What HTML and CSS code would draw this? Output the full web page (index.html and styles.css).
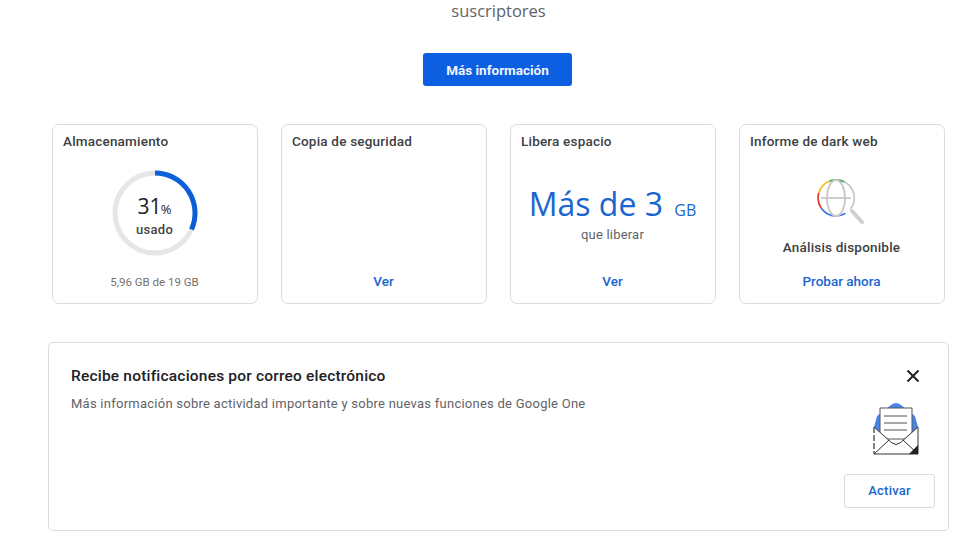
FILE: index.html
```html
<!DOCTYPE html>
<html lang="es">
<head>
<meta charset="utf-8">
<title>Google One</title>
<link rel="stylesheet" href="styles.css">
</head>
<body>
<main class="page">
  <section class="hero">
    <p class="hero-text">suscriptores</p>
    <button class="primary">Más información</button>
  </section>
  <section class="cards">
    <article class="card">
      <h2 class="card-title">Almacenamiento</h2>
      <div class="card-body">
        <div class="ring">
          <svg class="ring-svg" viewBox="0 0 86 86" width="86" height="86">
            <circle cx="43" cy="43" r="40" fill="none" stroke="#e6e6e6" stroke-width="5"/>
            <path d="M43 3A40 40 0 0 1 79.500 59.400" fill="none" stroke="#0b5fd8" stroke-width="5"/>
          </svg>
          <div class="ring-label">
            <div class="ring-value">31<span class="ring-pct">%</span></div>
            <div class="ring-used">usado</div>
          </div>
        </div>
      </div>
      <p class="card-foot muted">5,96 GB de 19 GB</p>
    </article>
    <article class="card">
      <h2 class="card-title">Copia de seguridad</h2>
      <div class="card-body"></div>
      <a class="card-foot link">Ver</a>
    </article>
    <article class="card">
      <h2 class="card-title">Libera espacio</h2>
      <div class="card-body free">
        <div class="free-amount">Más de 3 <span class="free-unit">GB</span></div>
        <div class="free-note">que liberar</div>
      </div>
      <a class="card-foot link">Ver</a>
    </article>
    <article class="card">
      <h2 class="card-title">Informe de dark web</h2>
      <div class="card-body dark">
        <svg class="dark-icon" viewBox="0 0 50 50" width="50" height="50">
          <g fill="none" stroke-width="1.800">
            <path d="M1.800 18A18 18 0 0 1 12.500 6.200" stroke="#f2c230"/>
            <path d="M12.500 6.200A18 18 0 0 1 27.500 7" stroke="#3aa757"/>
            <path d="M27.500 7A18 18 0 0 1 33.500 34" stroke="#c8c8c8"/>
            <path d="M1.800 18A18 18 0 0 0 4.200 33" stroke="#dc3f34"/>
            <path d="M4.200 33A18 18 0 0 0 28.500 38.300" stroke="#3f78e0"/>
            <ellipse cx="19" cy="23" rx="9" ry="18" stroke="#c8c8c8"/>
            <path d="M4 23H34" stroke="#c8c8c8"/>
          </g>
          <path d="M35 36L45 47" stroke="#cfcfcf" stroke-width="4" stroke-linecap="round" fill="none"/>
        </svg>
        <div class="dark-note">Análisis disponible</div>
      </div>
      <a class="card-foot link">Probar ahora</a>
    </article>
  </section>
  <section class="banner">
    <div class="banner-text">
      <h2 class="banner-title">Recibe notificaciones por correo electrónico</h2>
      <p class="banner-desc">Más información sobre actividad importante y sobre nuevas funciones de Google One</p>
    </div>
    <div class="banner-side">
      <svg class="close" viewBox="0 0 14 14" width="14" height="14">
        <path d="M1.500 1.500L12.500 12.500M12.500 1.500L1.500 12.500" stroke="#222" stroke-width="2" fill="none"/>
      </svg>
      <svg class="mail" viewBox="0 0 46 52" width="46" height="52">
        <path d="M1 24L4 13L18 2Q23 -2 28 2L42 13L45 24V34H1Z" fill="#4a86e8"/>
        <path d="M7 5H39V36H7Z" fill="#fff" stroke="#555" stroke-width="1"/>
        <path d="M11 13H34M11 20H34M11 27H34" stroke="#8a8a8a" stroke-width="1.400"/>
        <path d="M1 24L19 40Q23 43 27 40L45 24V51H1Z" fill="#fff"/>
        <path d="M1 24L19 40Q23 43 27 40L45 24V51H1" fill="none" stroke="#333" stroke-width="1"/>
        <path d="M1 24V51" stroke="#333" stroke-width="1.200" stroke-dasharray="6 2" fill="none"/>
        <path d="M1 51L16 37M45 51L30 37" stroke="#333" stroke-width="1" fill="none"/>
        <path d="M45 42V51H36Z" fill="#222"/>
      </svg>
      <button class="outline">Activar</button>
    </div>
  </section>
</main>
</body>
</html>
```
FILE: styles.css
```css
* { box-sizing: border-box; }
html, body { margin: 0; padding: 0; background: #fff; }
body {
  font-family: Roboto, "Liberation Sans", sans-serif;
  color: #3c4043;
  height: 555px;
  overflow: hidden;
}
.page { padding: 0 31px 0 48px; }
.hero {
  display: flex;
  flex-direction: column;
  align-items: center;
}
.hero-text {
  margin: -1px 0 0;
  font-family: "Open Sans", sans-serif;
  font-size: 16.500px;
  line-height: 23px;
  color: #5f6368;
  text-align: center;
}
.primary {
  margin: 31px 2px 0 0;
  width: 149px;
  height: 33px;
  border: 0;
  border-radius: 3px;
  background: #0b5fe0;
  color: #eef4ff;
  font-family: Roboto, sans-serif;
  font-weight: 700;
  font-size: 13.500px;
  padding: 0;
}
.cards {
  display: grid;
  grid-template-columns: repeat(4, 206px);
  gap: 23px;
  margin: 38px 0 0 4px;
}
.card {
  height: 180px;
  border: 1px solid #dadce0;
  border-radius: 7px;
  padding: 8px 11px 13px 10px;
  display: flex;
  flex-direction: column;
  align-items: stretch;
}
.card-title {
  margin: 0;
  font-size: 13.500px;
  font-weight: 500;
  line-height: 16px;
  color: #3c4043;
  letter-spacing: 0.2px;
}
.card-body {
  flex: 1;
  display: flex;
  flex-direction: column;
  align-items: center;
  min-height: 0;
}
.card-foot {
  margin: 0;
  text-align: center;
  font-size: 11.500px;
  line-height: 16px;
}
.muted { color: #7a6f6f; }
.link {
  color: #1a66d0;
  font-weight: 500;
  font-size: 13.500px;
  margin-bottom: 1px;
}
.ring {
  position: relative;
  width: 86px;
  height: 86px;
  margin-top: 21px;
}
.ring-svg { display: block; }
.ring-label {
  position: absolute;
  inset: 0;
  display: flex;
  flex-direction: column;
  align-items: center;
  padding-top: 23px;
}
.ring-value {
  font-family: "Open Sans", sans-serif;
  font-size: 21px;
  line-height: 26px;
  color: #202124;
}
.ring-pct { font-size: 13px; margin-left: -1px; }
.ring-used {
  font-size: 13px;
  font-weight: 500;
  line-height: 18px;
  letter-spacing: 0.3px;
  color: #444;
  margin-top: -1px;
}
.free { padding-top: 34px; }
.free-amount {
  font-family: "Open Sans", sans-serif;
  font-size: 32px;
  line-height: 42px;
  color: #1a66d0;
  white-space: nowrap;
}
.free-unit { font-size: 16px; margin-left: 3px; }
.free-note {
  font-size: 13px;
  line-height: 16px;
  color: #5f6368;
  margin-top: -4px;
  letter-spacing: 0.2px;
}
.dark { padding-top: 26px; }
.dark-icon { display: block; margin-left: 0; }
.dark-note {
  font-size: 13.500px;
  font-weight: 500;
  line-height: 16px;
  color: #3c4043;
  margin-top: 14px;
  letter-spacing: 0.2px;
}
.banner {
  margin-top: 38px;
  width: 901px;
  height: 189px;
  border: 1px solid #dadce0;
  border-radius: 5px;
  display: flex;
  justify-content: space-between;
  padding: 24px 13px 22px 22px;
}
.banner-title {
  margin: 0;
  font-size: 15.500px;
  font-weight: 500;
  line-height: 18px;
  color: #202124;
  letter-spacing: 0.2px;
}
.banner-desc {
  margin: 11px 0 0;
  font-size: 13px;
  line-height: 16px;
  color: #5f6368;
  letter-spacing: 0.25px;
}
.banner-side {
  width: 91px;
  display: flex;
  flex-direction: column;
  align-items: flex-end;
}
.close { display: block; margin: 2px 15px 0 0; }
.mail { display: block; margin: 20px 16px 0 0; }
.outline {
  margin-top: auto;
  width: 91px;
  height: 34px;
  background: #fff;
  border: 1px solid #dadce0;
  border-radius: 3px;
  color: #1a66d0;
  font-family: Roboto, sans-serif;
  font-weight: 500;
  font-size: 13px;
  letter-spacing: 0.2px;
  padding: 0 0 2px;
}
```
